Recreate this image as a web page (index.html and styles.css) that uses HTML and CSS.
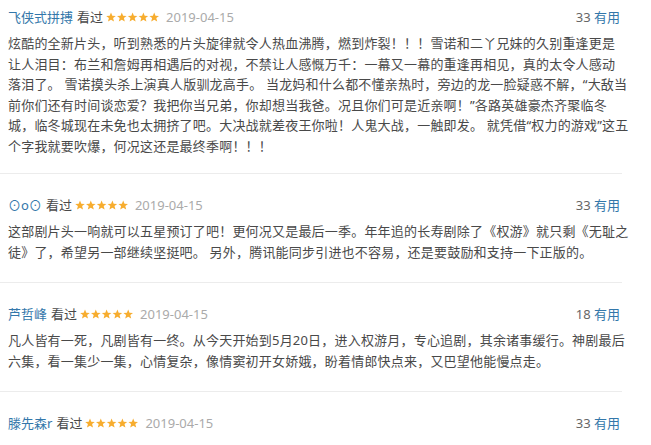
FILE: index.html
```html
<!DOCTYPE html>
<html lang="zh-CN">
<head>
  <meta charset="UTF-8">
  <title>短评</title>
  <link rel="stylesheet" href="styles.css">
</head>
<body>
  <div class="comment-list">

    <div class="comment-item">
      <div class="comment-info">
        <a class="user" href="#">飞侠式拼搏</a>
        <span class="status">看过</span>
        <svg class="stars" width="54" height="11" viewBox="0 0 54 11"><g fill="#f7ad2f"><polygon points="5,0.5 6.3,3.7 9.8,3.9 7.1,6.1 8,9.6 5,7.7 2,9.6 2.9,6.1 0.2,3.9 3.7,3.7"/><polygon transform="translate(10.8 0)" points="5,0.5 6.3,3.7 9.8,3.9 7.1,6.1 8,9.6 5,7.7 2,9.6 2.9,6.1 0.2,3.9 3.7,3.7"/><polygon transform="translate(21.6 0)" points="5,0.5 6.3,3.7 9.8,3.9 7.1,6.1 8,9.6 5,7.7 2,9.6 2.9,6.1 0.2,3.9 3.7,3.7"/><polygon transform="translate(32.4 0)" points="5,0.5 6.3,3.7 9.8,3.9 7.1,6.1 8,9.6 5,7.7 2,9.6 2.9,6.1 0.2,3.9 3.7,3.7"/><polygon transform="translate(43.2 0)" points="5,0.5 6.3,3.7 9.8,3.9 7.1,6.1 8,9.6 5,7.7 2,9.6 2.9,6.1 0.2,3.9 3.7,3.7"/></g></svg>
        <span class="time">2019-04-15</span>
        <span class="votes">33 <a href="#">有用</a></span>
      </div>
      <p class="short">炫酷的全新片头，听到熟悉的片头旋律就令人热血沸腾，燃到炸裂！！！雪诺和二丫兄妹的久别重逢更是<br>让人泪目：布兰和詹姆再相遇后的对视，不禁让人感慨万千：一幕又一幕的重逢再相见，真的太令人感动<br>落泪了。 雪诺摸头杀上演真人版驯龙高手。 当龙妈和什么都不懂亲热时，旁边的龙一脸疑惑不解，“大敌当<br>前你们还有时间谈恋爱？我把你当兄弟，你却想当我爸。况且你们可是近亲啊！”各路英雄豪杰齐聚临冬<br>城，临冬城现在未免也太拥挤了吧。大决战就差夜王你啦！人鬼大战，一触即发。 就凭借“权力的游戏”这五<br>个字我就要吹爆，何况这还是最终季啊！！！</p>
    </div>

    <div class="comment-item">
      <div class="comment-info">
        <a class="user" href="#">⊙o⊙</a>
        <span class="status">看过</span>
        <svg class="stars" width="54" height="11" viewBox="0 0 54 11"><g fill="#f7ad2f"><polygon points="5,0.5 6.3,3.7 9.8,3.9 7.1,6.1 8,9.6 5,7.7 2,9.6 2.9,6.1 0.2,3.9 3.7,3.7"/><polygon transform="translate(10.8 0)" points="5,0.5 6.3,3.7 9.8,3.9 7.1,6.1 8,9.6 5,7.7 2,9.6 2.9,6.1 0.2,3.9 3.7,3.7"/><polygon transform="translate(21.6 0)" points="5,0.5 6.3,3.7 9.8,3.9 7.1,6.1 8,9.6 5,7.7 2,9.6 2.9,6.1 0.2,3.9 3.7,3.7"/><polygon transform="translate(32.4 0)" points="5,0.5 6.3,3.7 9.8,3.9 7.1,6.1 8,9.6 5,7.7 2,9.6 2.9,6.1 0.2,3.9 3.7,3.7"/><polygon transform="translate(43.2 0)" points="5,0.5 6.3,3.7 9.8,3.9 7.1,6.1 8,9.6 5,7.7 2,9.6 2.9,6.1 0.2,3.9 3.7,3.7"/></g></svg>
        <span class="time">2019-04-15</span>
        <span class="votes">33 <a href="#">有用</a></span>
      </div>
      <p class="short">这部剧片头一响就可以五星预订了吧！更何况又是最后一季。年年追的长寿剧除了《权游》就只剩《无耻之<br>徒》了，希望另一部继续坚挺吧。 另外，腾讯能同步引进也不容易，还是要鼓励和支持一下正版的。</p>
    </div>

    <div class="comment-item">
      <div class="comment-info">
        <a class="user" href="#">芦哲峰</a>
        <span class="status">看过</span>
        <svg class="stars" width="54" height="11" viewBox="0 0 54 11"><g fill="#f7ad2f"><polygon points="5,0.5 6.3,3.7 9.8,3.9 7.1,6.1 8,9.6 5,7.7 2,9.6 2.9,6.1 0.2,3.9 3.7,3.7"/><polygon transform="translate(10.8 0)" points="5,0.5 6.3,3.7 9.8,3.9 7.1,6.1 8,9.6 5,7.7 2,9.6 2.9,6.1 0.2,3.9 3.7,3.7"/><polygon transform="translate(21.6 0)" points="5,0.5 6.3,3.7 9.8,3.9 7.1,6.1 8,9.6 5,7.7 2,9.6 2.9,6.1 0.2,3.9 3.7,3.7"/><polygon transform="translate(32.4 0)" points="5,0.5 6.3,3.7 9.8,3.9 7.1,6.1 8,9.6 5,7.7 2,9.6 2.9,6.1 0.2,3.9 3.7,3.7"/><polygon transform="translate(43.2 0)" points="5,0.5 6.3,3.7 9.8,3.9 7.1,6.1 8,9.6 5,7.7 2,9.6 2.9,6.1 0.2,3.9 3.7,3.7"/></g></svg>
        <span class="time">2019-04-15</span>
        <span class="votes">18 <a href="#">有用</a></span>
      </div>
      <p class="short">凡人皆有一死，凡剧皆有一终。从今天开始到5月20日，进入权游月，专心追剧，其余诸事缓行。神剧最后<br>六集，看一集少一集，心情复杂，像情窦初开女娇娥，盼着情郎快点来，又巴望他能慢点走。</p>
    </div>

    <div class="comment-item">
      <div class="comment-info">
        <a class="user" href="#">滕先森r</a>
        <span class="status">看过</span>
        <svg class="stars" width="54" height="11" viewBox="0 0 54 11"><g fill="#f7ad2f"><polygon points="5,0.5 6.3,3.7 9.8,3.9 7.1,6.1 8,9.6 5,7.7 2,9.6 2.9,6.1 0.2,3.9 3.7,3.7"/><polygon transform="translate(10.8 0)" points="5,0.5 6.3,3.7 9.8,3.9 7.1,6.1 8,9.6 5,7.7 2,9.6 2.9,6.1 0.2,3.9 3.7,3.7"/><polygon transform="translate(21.6 0)" points="5,0.5 6.3,3.7 9.8,3.9 7.1,6.1 8,9.6 5,7.7 2,9.6 2.9,6.1 0.2,3.9 3.7,3.7"/><polygon transform="translate(32.4 0)" points="5,0.5 6.3,3.7 9.8,3.9 7.1,6.1 8,9.6 5,7.7 2,9.6 2.9,6.1 0.2,3.9 3.7,3.7"/><polygon transform="translate(43.2 0)" points="5,0.5 6.3,3.7 9.8,3.9 7.1,6.1 8,9.6 5,7.7 2,9.6 2.9,6.1 0.2,3.9 3.7,3.7"/></g></svg>
        <span class="time">2019-04-15</span>
        <span class="votes">33 <a href="#">有用</a></span>
      </div>
    </div>

  </div>
</body>
</html>
```

FILE: styles.css
```css
/* Short comment list */
:root {
  --link: #3377aa;
  --text: #494949;
  --text-muted: #aaaaaa;
  --text-vote: #666666;
  --border: #ececec;
}

* {
  margin: 0;
  padding: 0;
  box-sizing: border-box;
}

body {
  font-family: "Noto Sans", "Noto Sans CJK SC", sans-serif;
  font-size: 13px;
  color: var(--text);
  background: #ffffff;
}

a {
  color: var(--link);
  text-decoration: none;
}

.comment-list {
  width: 622px;
}

.comment-item {
  padding: 21px 2px 20px 8px;
  border-bottom: 1px solid var(--border);
}

.comment-item:first-child {
  padding-top: 7px;
  padding-bottom: 17px;
}

.comment-item:last-child {
  border-bottom: none;
}

.comment-info {
  display: flex;
  align-items: center;
  height: 20px;
  line-height: 20px;
  white-space: nowrap;
}

.status {
  margin-left: 4px;
  color: var(--text);
}

.stars {
  margin-left: 3px;
  display: block;
}

.time {
  margin-left: 6px;
  color: var(--text-muted);
}

.votes {
  margin-left: auto;
  color: var(--text-vote);
}

.short {
  margin-top: 6px;
  line-height: 20.5px;
  letter-spacing: 0.2px;
  white-space: nowrap;
}
```
